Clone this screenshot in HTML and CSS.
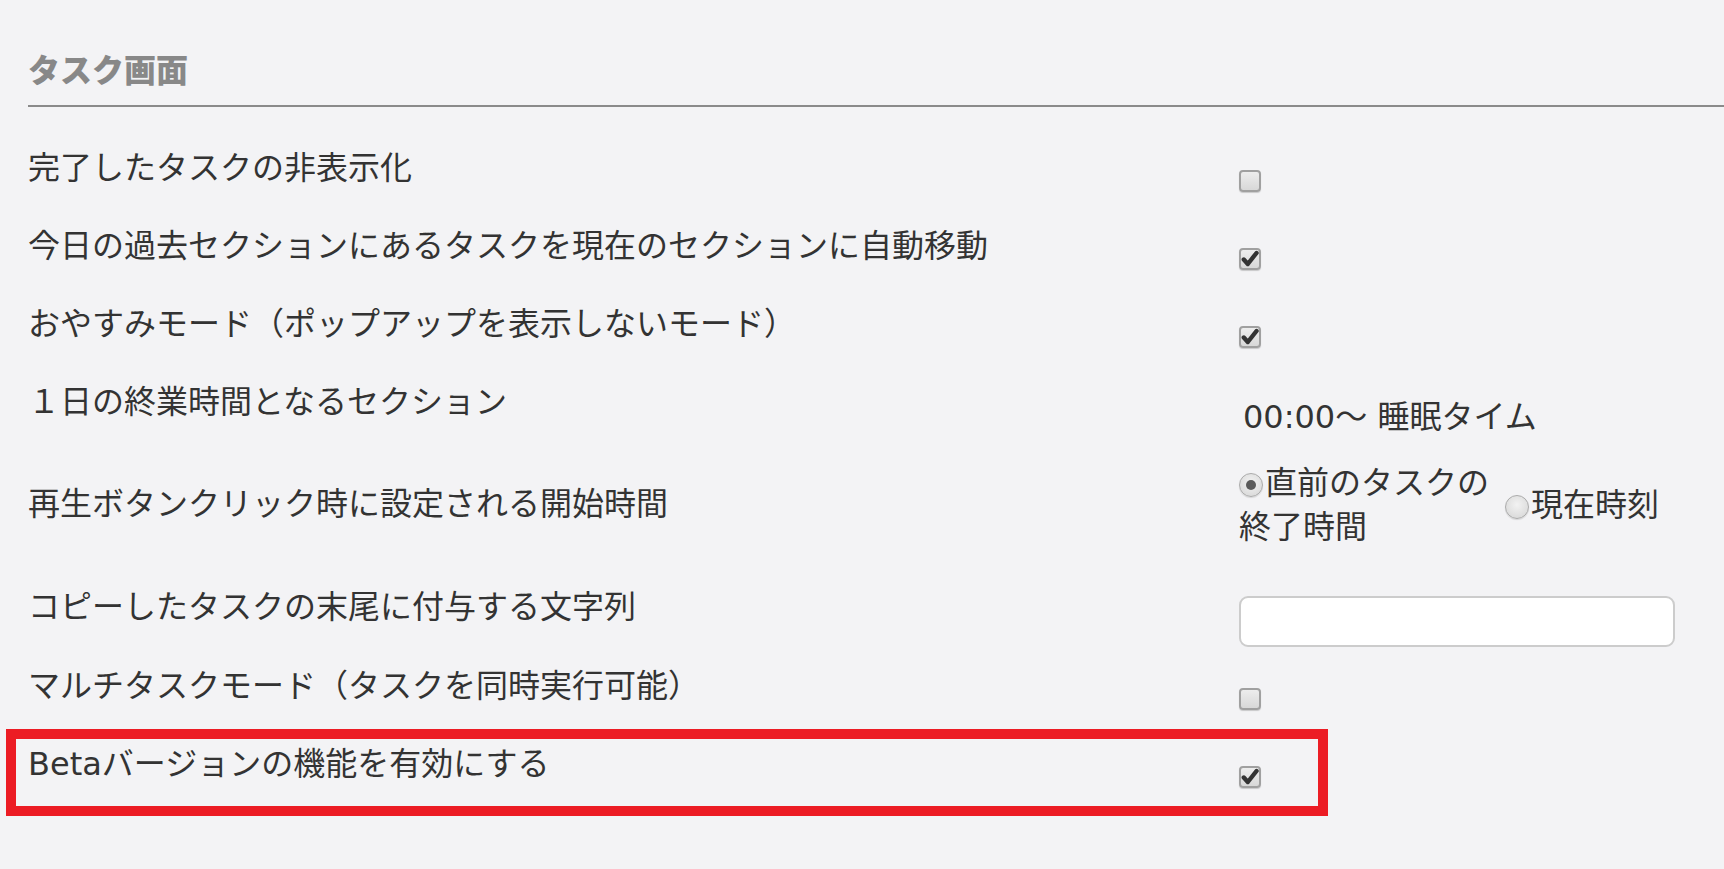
FILE: index.html
```html
<!DOCTYPE html>
<html lang="ja">
<head>
<meta charset="utf-8">
<title>タスク画面</title>
<link rel="stylesheet" href="styles.css">
</head>
<body>
<div class="page">
  <h2 class="section-title">タスク画面</h2>
  <div class="settings">
    <div class="row">
      <div class="label">完了したタスクの非表示化</div>
      <div class="val"><span class="cb"></span></div>
    </div>
    <div class="row">
      <div class="label">今日の過去セクションにあるタスクを現在のセクションに自動移動</div>
      <div class="val"><span class="cb checked"><svg viewBox="0 0 22 22" width="22" height="22"><path d="M4.8 11.5 L8.8 16 L17.5 5" fill="none" stroke="#333" stroke-width="4.4" stroke-linecap="round" stroke-linejoin="round"/></svg></span></div>
    </div>
    <div class="row">
      <div class="label">おやすみモード（ポップアップを表示しないモード）</div>
      <div class="val"><span class="cb checked"><svg viewBox="0 0 22 22" width="22" height="22"><path d="M4.8 11.5 L8.8 16 L17.5 5" fill="none" stroke="#333" stroke-width="4.4" stroke-linecap="round" stroke-linejoin="round"/></svg></span></div>
    </div>
    <div class="row">
      <div class="label">１日の終業時間となるセクション</div>
      <div class="val val-text">00:00～ 睡眠タイム</div>
    </div>
    <div class="row tall">
      <div class="label">再生ボタンクリック時に設定される開始時間</div>
      <div class="val val-radios">
        <div class="radio-opt first"><span class="rd on"></span>直前のタスクの終了時間</div>
        <div class="radio-opt"><span class="rd"></span>現在時刻</div>
      </div>
    </div>
    <div class="row">
      <div class="label">コピーしたタスクの末尾に付与する文字列</div>
      <div class="val val-input"><input class="text-input" type="text"></div>
    </div>
    <div class="row">
      <div class="label">マルチタスクモード（タスクを同時実行可能）</div>
      <div class="val"><span class="cb"></span></div>
    </div>
    <div class="row highlight">
      <div class="label">Betaバージョンの機能を有効にする</div>
      <div class="val"><span class="cb checked"><svg viewBox="0 0 22 22" width="22" height="22"><path d="M4.8 11.5 L8.8 16 L17.5 5" fill="none" stroke="#333" stroke-width="4.4" stroke-linecap="round" stroke-linejoin="round"/></svg></span></div>
      <div class="annotation"></div>
    </div>
  </div>
</div>
</body>
</html>
```

FILE: styles.css
```css
html, body {
  margin: 0;
  padding: 0;
  background: #f3f3f5;
}

body {
  font-family: "DejaVu Sans", "Noto Sans CJK JP", sans-serif;
  color: #333;
  font-size: 32px;
}

.page {
  padding-left: 28px;
  padding-bottom: 50px;
}

.section-title {
  margin: 0;
  padding-top: 48px;
  padding-bottom: 17px;
  line-height: 40px;
  font-size: 32px;
  font-weight: 900;
  color: #888888;
  font-family: "Noto Sans CJK JP", sans-serif;
  border-bottom: 2px solid #8a8a8a;
}

.settings {
  margin-top: 22px;
}

.row {
  display: grid;
  grid-template-columns: 1211px 445px;
  align-items: center;
  min-height: 78px;
  position: relative;
}

.row.tall {
  min-height: 127px;
}

.label {
  line-height: 45px;
  white-space: nowrap;
}

.val {
  padding-top: 26px;
  display: flex;
  align-items: center;
}

.val-text {
  padding-top: 30px;
  padding-left: 4px;
  line-height: 45px;
}

.val-input {
  padding-top: 28px;
}

.val-radios {
  padding-top: 0;
  line-height: 44px;
}

.cb {
  width: 22px;
  height: 22px;
  box-sizing: border-box;
  border: 2px solid #a0a0a0;
  border-radius: 4px;
  background: linear-gradient(#ededed, #d8d8d8);
  box-shadow: 0 1px 1px rgba(0, 0, 0, 0.18);
  display: inline-flex;
  align-items: center;
  justify-content: center;
  overflow: hidden;
}

.cb svg {
  display: block;
  flex: none;
  margin: -2px;
}

.radio-opt {
  display: block;
}

.radio-opt.first {
  width: 266px;
}

.rd {
  display: inline-block;
  width: 24px;
  height: 24px;
  box-sizing: border-box;
  border: 1px solid #ababab;
  border-radius: 50%;
  background: radial-gradient(circle at 50% 40%, #f2f2f2, #d4d4d4);
  box-shadow: 0 1px 1px rgba(0, 0, 0, 0.12);
  margin-right: 2px;
  vertical-align: -3px;
  position: relative;
}

.rd.on::after {
  content: "";
  position: absolute;
  left: 6px;
  top: 6px;
  width: 10px;
  height: 10px;
  border-radius: 50%;
  background: #5a5a5a;
}

.text-input {
  width: 436px;
  height: 51px;
  box-sizing: border-box;
  border: 2px solid #cccccc;
  border-radius: 9px;
  background: #fff;
  margin: 0;
  padding: 0 10px;
  font: inherit;
  outline: none;
}

.annotation {
  position: absolute;
  left: -22px;
  top: 4px;
  width: 1322px;
  height: 87px;
  box-sizing: border-box;
  border: 10px solid #ec1c24;
  pointer-events: none;
}
```
